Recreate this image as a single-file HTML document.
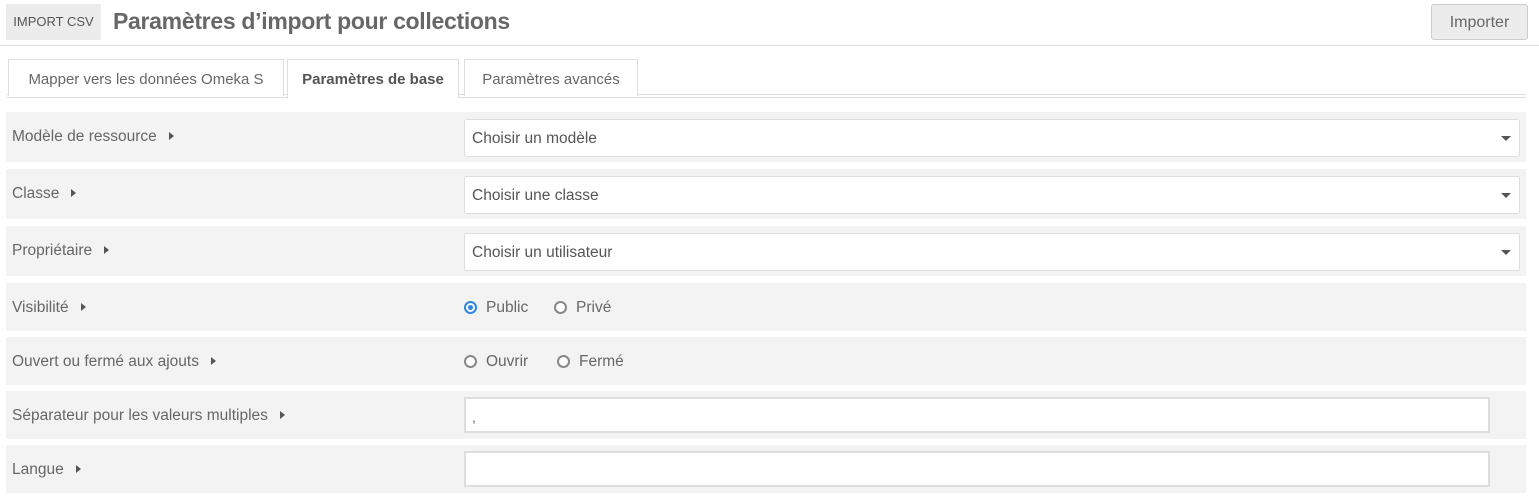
<!DOCTYPE html>
<html><head><meta charset="utf-8"><style>
*{box-sizing:border-box;margin:0;padding:0}
body{width:1539px;height:498px;background:#fff;font-family:"Liberation Sans",sans-serif;color:#676767;position:relative;overflow:hidden}
.a{position:absolute}
.hdr{left:0;top:45px;width:1539px;height:1px;background:#dedede}
.badge{left:6px;top:4px;width:95px;height:36px;background:#ececec;font-size:13px;line-height:36px;text-align:center;color:#555}
h1{position:absolute;left:113px;top:8px;font-size:23px;font-weight:bold;color:#676767;letter-spacing:-0.3px}
.btn{left:1431px;top:4px;width:97px;height:36px;background:#ececec;border:1px solid #ccc;border-radius:3px;font-size:16px;line-height:35px;text-align:center;color:#676767}
.tab{top:59px;height:37px;border:1px solid #dedede;border-bottom:none;font-size:15px;line-height:39px;text-align:center;background:#fff}
.tl{left:6px;top:94px;width:1520px;height:1px;background:#dedede}
.tl2{left:6px;top:97px;width:1520px;height:1px;background:#dedede}
.row{left:6px;width:1520px;background:#f3f3f3}
.lbl{position:absolute;left:6px;font-size:15.5px;color:#676767}
.lbl i{display:inline-block;width:0;height:0;border-top:4.5px solid transparent;border-bottom:4.5px solid transparent;border-left:5px solid #555;margin-left:12px;vertical-align:1px}
.sel{position:absolute;left:458px;width:1056px;height:38px;background:#fff;border:1px solid #ddd;border-radius:3px;font-size:15.5px;line-height:38px;padding-left:7px;color:#555}
.sel:after{content:"";position:absolute;right:8px;top:16px;border-left:5px solid transparent;border-right:5px solid transparent;border-top:5px solid #555}
.inp{position:absolute;left:458px;width:1026px;height:36px;background:#fff;border:2px solid #ddd;font-size:14px;padding-left:6px;line-height:36px}
.rad{position:absolute;font-size:15.5px;color:#676767}
.rad b{display:inline-block;width:13px;height:13px;border:2px solid #888;border-radius:50%;vertical-align:-2px;margin-right:9px;background:#fff}
.rad b.on{border-color:#2f86e0;position:relative}
.rad b.on:after{content:"";position:absolute;left:2px;top:2px;width:5px;height:5px;border-radius:50%;background:#2f86e0}
</style></head><body>
<div class="a badge">IMPORT CSV</div>
<h1>Paramètres d’import pour collections</h1>
<div class="a btn">Importer</div>
<div class="a hdr"></div>
<div class="a tl"></div><div class="a tl2"></div>
<div class="a tab" style="left:8px;width:276px">Mapper vers les données Omeka S</div>
<div class="a tab" style="left:287px;width:172px;font-weight:bold;color:#555;height:39px">Paramètres de base</div>
<div class="a tab" style="left:464px;width:174px">Paramètres avancés</div>

<div class="a row" style="top:112px;height:50px"><div class="lbl" style="top:16px">Modèle de ressource<i></i></div><div class="sel" style="top:7px">Choisir un modèle</div></div>
<div class="a row" style="top:169px;height:50px"><div class="lbl" style="top:16px">Classe<i></i></div><div class="sel" style="top:7px">Choisir une classe</div></div>
<div class="a row" style="top:226px;height:50px"><div class="lbl" style="top:16px">Propriétaire<i></i></div><div class="sel" style="top:7px">Choisir un utilisateur</div></div>
<div class="a row" style="top:283px;height:48px"><div class="lbl" style="top:16px">Visibilité<i></i></div>
<div class="rad" style="left:458px;top:16px"><b class="on"></b>Public</div><div class="rad" style="left:548px;top:16px"><b></b>Privé</div></div>
<div class="a row" style="top:337px;height:48px"><div class="lbl" style="top:16px">Ouvert ou fermé aux ajouts<i></i></div>
<div class="rad" style="left:458px;top:16px"><b></b>Ouvrir</div><div class="rad" style="left:551px;top:16px"><b></b>Fermé</div></div>
<div class="a row" style="top:391px;height:48px"><div class="lbl" style="top:16px">Séparateur pour les valeurs multiples<i></i></div><div class="inp" style="top:6px">,</div></div>
<div class="a row" style="top:445px;height:48px"><div class="lbl" style="top:16px">Langue<i></i></div><div class="inp" style="top:6px"></div></div>
</body></html>
